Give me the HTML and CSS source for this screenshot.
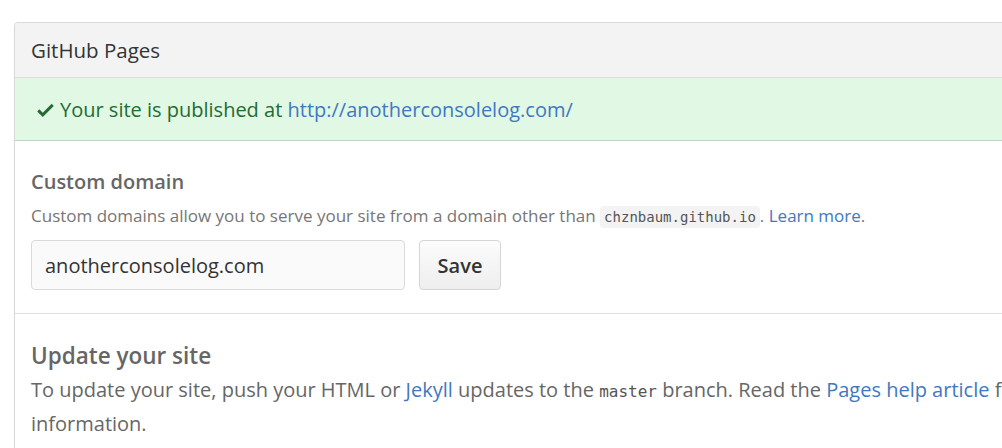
FILE: index.html
```html
<!DOCTYPE html>
<html>
<head>
<meta charset="utf-8">
<link rel="stylesheet" href="styles.css">
</head>
<body>
<div class="box">
  <div class="box-header">GitHub Pages</div>
  <div class="flash">
    <svg class="check" viewBox="0 0 12 16" width="17" height="22"><path fill="currentColor" d="M12 5l-8 8-4-4 1.5-1.5L4 10l6.5-6.5L12 5z"/></svg>
    <span>Your site is published at <a href="#">http://anotherconsolelog.com/</a></span>
  </div>
  <div class="section">
    <h3 class="sec-title">Custom domain</h3>
    <p class="note">Custom domains allow you to serve your site from a domain other than <code>chznbaum.github.io</code>. <a href="#">Learn more</a>.</p>
    <div class="form-row">
      <div class="input">anotherconsolelog.com</div>
      <button class="btn">Save</button>
    </div>
  </div>
  <div class="section section-last">
    <h3 class="sec-title big">Update your site</h3>
    <p class="para">To update your site, push your HTML or <a href="#">Jekyll</a> updates to the <code class="tt">master</code> branch. Read the <a href="#">Pages help article</a> for more information.</p>
  </div>
</div>
</body>
</html>
```
FILE: styles.css
```css
html, body {
  margin: 0;
  padding: 0;
  background: #fff;
  overflow: hidden;
}
body {
  font-family: "Open Sans", "Noto Sans", sans-serif;
  color: #333;
}
a { color: #4078c0; text-decoration: none; }
.box {
  margin: 22px 0 0 14px;
  width: 1120px;
  border: 1px solid #d8d8d8;
  border-radius: 4px;
}
.box-header {
  height: 55px;
  box-sizing: border-box;
  padding: 0 16px;
  display: flex;
  align-items: center;
  background: #f3f3f3;
  border-bottom: 1px solid #dcdcdc;
  font-size: 20.5px;
  color: #333;
  border-radius: 4px 4px 0 0;
}
.flash {
  height: 63px;
  box-sizing: border-box;
  display: flex;
  align-items: center;
  padding: 1px 22px 0;
  gap: 6px;
  background: #e0f8e4;
  border-bottom: 1px solid #bcd6c0;
  color: #236b33;
  font-size: 20px;
}
.check { color: #236b33; flex: none; }
.section {
  padding: 27px 16px 23px;
  border-bottom: 1px solid #e0e0e0;
}
.section-last { border-bottom: none; padding-top: 27px; }
.sec-title {
  margin: 0;
  font-size: 20px;
  font-weight: 600;
  color: #666;
  line-height: 28px;
}
.sec-title.big { font-size: 22.5px; line-height: 30px; }
.note {
  margin: 8px 0 11px;
  font-size: 17px;
  color: #767676;
  line-height: 24px;
}
code {
  font-family: "DejaVu Sans Mono", "Liberation Mono", monospace;
  font-size: 14px;
  background: #f3f3f3;
  border-radius: 4px;
  padding: 3px 4px;
  color: #555;
}
code.tt { background: none; padding: 0; font-size: 16px; }
.form-row {
  display: flex;
  gap: 14px;
}
.input {
  width: 374px;
  height: 50px;
  box-sizing: border-box;
  border: 1px solid #dadada;
  border-radius: 4px;
  background: #fafafa;
  padding: 0 13px;
  display: flex;
  align-items: center;
  font-size: 20px;
  color: #333;
}
.btn {
  width: 82px;
  height: 50px;
  border: 1px solid #d5d5d5;
  border-radius: 4px;
  background: linear-gradient(#fcfcfc, #eeeeee);
  font-family: inherit;
  font-size: 20px;
  font-weight: 600;
  color: #333;
}
.para {
  margin: 3px 0 0;
  font-size: 20px;
  line-height: 32px;
  color: #666;
}
```
